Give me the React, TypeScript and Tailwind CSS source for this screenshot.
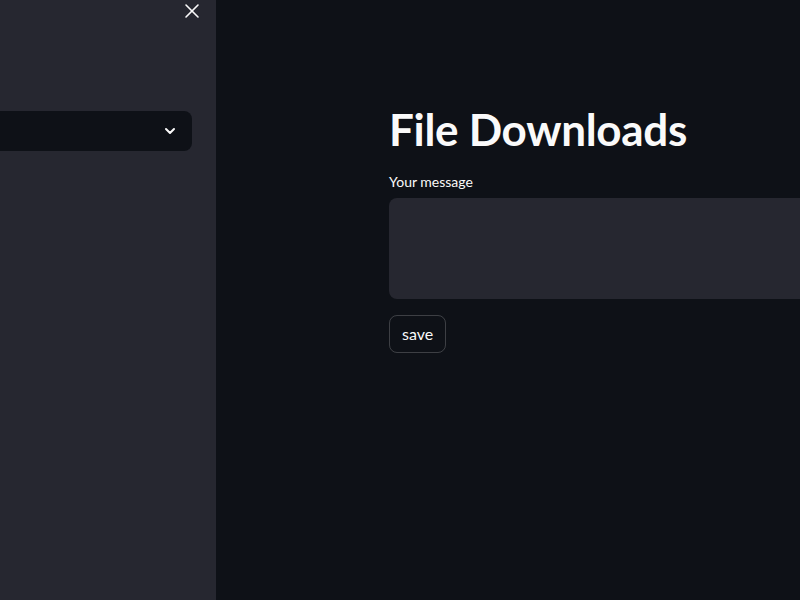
import { X, ChevronDown } from "lucide-react";

export default function App() {
  return (
    <div
      className="flex h-[600px] w-[800px] overflow-hidden bg-[#0e1117] text-[#fafafa]"
      style={{ fontFamily: 'Lato, "Noto Sans", sans-serif' }}
    >
      {/* sidebar */}
      <aside className="flex w-[216px] shrink-0 flex-col bg-[#262730]">
        <div className="flex h-[22px] justify-end pr-[12px]">
          <button className="flex h-[22px] w-[24px] items-center justify-center text-[#fafafa]">
            <X size={24} strokeWidth={1.6} />
          </button>
        </div>
        <div className="mt-[89px] pr-[24px]">
          <div className="flex h-[40px] items-center justify-end rounded-r-lg bg-[#0e1117] pr-[14px]">
            <ChevronDown size={16} strokeWidth={3} />
          </div>
        </div>
      </aside>

      {/* main */}
      <main className="flex min-w-0 flex-1 flex-col pl-[173px] pt-[100px]">
        <h1 className="text-[44px] font-bold leading-[58px] tracking-[-0.3px] whitespace-nowrap">
          File Downloads
        </h1>
        <label className="mt-[14px] text-[14px] leading-[20px]">Your message</label>
        <div className="mt-[6px] h-[101px] w-[600px] shrink-0 rounded-lg bg-[#262730]" />
        <div className="mt-[16px]">
          <button className="h-[38px] rounded-lg border border-[rgba(250,250,250,0.2)] px-[12px] text-[16px] leading-[20px]">
            save
          </button>
        </div>
      </main>
    </div>
  );
}
